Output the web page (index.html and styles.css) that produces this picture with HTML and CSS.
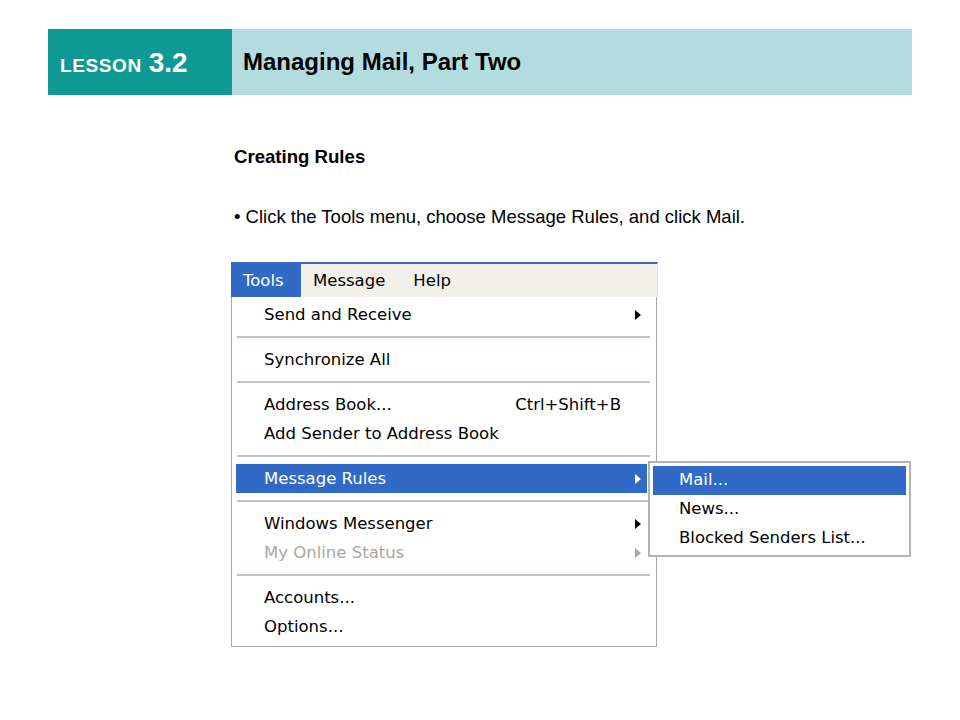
FILE: index.html
```html
<!DOCTYPE html>
<html lang="en">
<head>
    <meta charset="UTF-8">
    <title>Lesson 3.2 - Managing Mail, Part Two</title>
    <link rel="stylesheet" href="styles.css">
</head>
<body>
    <div class="banner">
        <div class="lesson-no">LESSON <span class="num">3.2</span></div>
        <div class="lesson-title">Managing Mail, Part Two</div>
    </div>

    <div class="content">
        <h3 class="topic">Creating Rules</h3>
        <p class="step">&bull; Click the Tools menu, choose Message Rules, and click Mail.</p>

        <div class="shot">
            <div class="menubar">
                <span class="top active">Tools</span>
                <span class="top">Message</span>
                <span class="top">Help</span>
            </div>
            <div class="dropdown">
                <div class="item sub">Send and Receive</div>
                <div class="sep"></div>
                <div class="item">Synchronize All</div>
                <div class="sep"></div>
                <div class="item"><span>Address Book...</span><span class="key">Ctrl+Shift+B</span></div>
                <div class="item">Add Sender to Address Book</div>
                <div class="sep"></div>
                <div class="item sub hot">Message Rules</div>
                <div class="sep"></div>
                <div class="item sub">Windows Messenger</div>
                <div class="item sub off">My Online Status</div>
                <div class="sep"></div>
                <div class="item">Accounts...</div>
                <div class="item">Options...</div>
            </div>
            <div class="submenu">
                <div class="item hot">Mail...</div>
                <div class="item">News...</div>
                <div class="item">Blocked Senders List...</div>
            </div>
        </div>
    </div>
</body>
</html>
```

FILE: styles.css
```css
body {
    margin: 0;
    background: #ffffff;
    font-family: "Liberation Sans", Arial, sans-serif;
    color: #000;
}
.banner {
    display: flex;
    margin: 29px 0 0 48px;
    width: 864px;
    height: 66px;
}
.lesson-no {
    width: 172px;
    padding-left: 12px;
    background: #0e9994;
    color: #fff;
    font-weight: bold;
    font-size: 19px;
    letter-spacing: 0.6px;
    display: flex;
    align-items: baseline;
    padding-top: 18px;
    gap: 7px;
}
.lesson-no .num {
    font-size: 28px;
    letter-spacing: 0;
}
.lesson-title {
    flex: 1;
    background: #b3dce0;
    padding-left: 11px;
    font-weight: bold;
    font-size: 24px;
    display: flex;
    align-items: center;
}
.content {
    padding-left: 234px;
}
.topic {
    margin: 51px 0 0;
    font-size: 18.6px;
    line-height: 22px;
}
.step {
    margin: 38px 0 0;
    font-size: 18.5px;
    line-height: 22px;
}

/* XP style menu screenshot */
.shot {
    position: relative;
    margin: 34px 0 0 -3px;
    width: 427px;
    font-family: "DejaVu Sans", Tahoma, sans-serif;
    font-size: 16.5px;
}
.menubar {
    display: flex;
    height: 33px;
    border-top: 2px solid #3a66c8;
    background: #f2f0ea;
    border-right: 1px solid #e4e2da;
}
.menubar .top {
    padding: 0 12px;
    line-height: 33px;
}
.menubar .top:last-child {
    padding-left: 16px;
}
.menubar .top.active {
    background: #316ac5;
    color: #fff;
    width: 46px;
}
.dropdown {
    width: 426px;
    border: 1px solid #a9a9a4;
    border-top: none;
    background: #fff;
    padding: 3px 0 5px 4px;
    box-sizing: border-box;
    height: 350px;
}
.item {
    position: relative;
    display: flex;
    justify-content: space-between;
    height: 29px;
    line-height: 29px;
    padding: 0 40px 0 28px;
    margin-right: 9px;
}
.item .key {
    margin-right: -14px;
}
.item.sub::after {
    content: "";
    position: absolute;
    right: 6px;
    top: 10px;
    border-left: 6px solid #000;
    border-top: 5px solid transparent;
    border-bottom: 5px solid transparent;
}
.item.off {
    color: #a8a8a0;
}
.item.off::after {
    border-left-color: #a8a8a0;
}
.item.hot {
    background: #3169c6;
    color: #fff;
}
.item.hot::after {
    border-left-color: #fff;
}
.sep {
    height: 2px;
    background: #c5c2b8;
    margin: 7px 6px 7px 1px;
}
.submenu {
    position: absolute;
    left: 417px;
    top: 199px;
    width: 263px;
    height: 96px;
    box-sizing: border-box;
    border: 2px solid #b5b3ad;
    background: #fff;
    padding: 3px 3px 0 3px;
}
.submenu .item {
    margin: 0;
    padding-left: 26px;
    line-height: 27px;
}
```
